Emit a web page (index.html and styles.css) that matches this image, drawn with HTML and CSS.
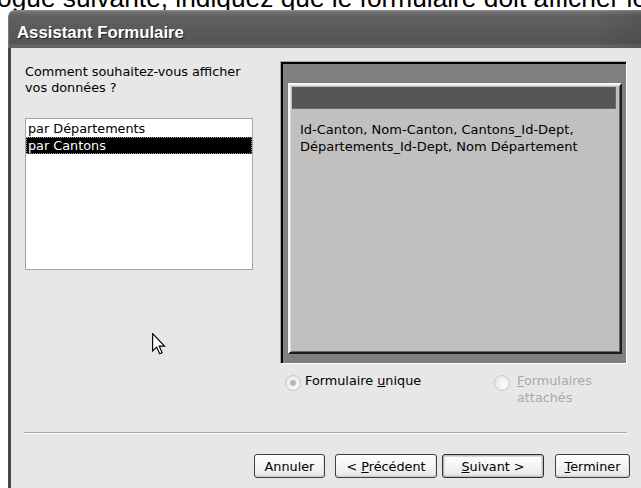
FILE: index.html
```html
<!DOCTYPE html>
<html lang="fr">
<head>
<meta charset="utf-8">
<title>Assistant Formulaire</title>
<link rel="stylesheet" href="styles.css">
</head>
<body>
  <div class="caption-line">ogue suivante, indiquez que le formulaire doit afficher les données</div>

  <div class="window">
    <div class="titlebar"><span class="title">Assistant Formulaire</span></div>

    <div class="client">
      <div class="main">
        <div class="left">
          <p class="prompt">Comment souhaitez-vous afficher<br>vos données ?</p>
          <ul class="listbox">
            <li class="item">par Départements</li>
            <li class="item selected">par Cantons</li>
          </ul>
        </div>

        <div class="right">
          <div class="preview">
            <div class="form-sample">
              <div class="form-head"></div>
              <p class="fields">Id-Canton, Nom-Canton, Cantons_Id-Dept,<br>Départements_Id-Dept, Nom Département</p>
            </div>
          </div>

          <div class="options">
            <label class="option single">
              <span class="radio checked"></span>
              <span class="option-text">Formulaire <u>u</u>nique</span>
            </label>
            <label class="option linked disabled">
              <span class="radio"></span>
              <span class="option-text"><u>F</u>ormulaires<br>attachés</span>
            </label>
          </div>
        </div>
      </div>

      <div class="separator"></div>

      <div class="buttons">
        <button class="btn btn-cancel">Annuler</button>
        <button class="btn btn-back">&lt; <u>P</u>récédent</button>
        <button class="btn btn-next default"><u>S</u>uivant &gt;</button>
        <button class="btn btn-finish"><u>T</u>erminer</button>
      </div>
    </div>
  </div>

  <svg class="cursor" width="14" height="22" viewBox="0 0 12 19" aria-hidden="true">
    <path d="M0.5 0.5 L0.5 15.5 L4 12.2 L6.6 18 L8.7 17.1 L6.2 11.4 L10.8 11.4 Z" fill="#fff" stroke="#000" stroke-width="1" stroke-linejoin="miter"/>
  </svg>
</body>
</html>
```

FILE: styles.css
```css
html, body {
  margin: 0;
  padding: 0;
}

body {
  width: 641px;
  height: 488px;
  overflow: hidden;
  background: #ffffff;
  font-family: "DejaVu Sans", Tahoma, sans-serif;
  font-size: 12.8px;
  color: #000;
}

/* line of document text above the dialog, cut by the top edge */
.caption-line {
  font-family: "Liberation Sans", Arial, sans-serif;
  font-size: 26.3px;
  line-height: 26px;
  white-space: nowrap;
  height: 25px;
  margin: -15px 0 0 -3px;
}

/* dialog window */
.window {
  position: relative;
  z-index: 1;
  margin-left: 8px;
  width: 660px;
  height: 478px;
}

.titlebar {
  box-sizing: border-box;
  height: 38px;
  padding: 13px 0 0 9px;
  border-radius: 7px 7px 0 0;
  background:
    linear-gradient(to right, rgba(0,0,0,0) 0, rgba(0,0,0,0) 590px, rgba(0,0,0,0.12) 640px),
    linear-gradient(to bottom,
      #9a9a9a 0, #7c7c7c 1px, #6c6c6c 3px, #606060 6px,
      #5a5a5a 20px, #555555 32px, #5c5c5c 35px, #6a6a6a 36px, #5e5e5e 38px);
  box-shadow: inset 1px 0 0 #7a7a7a;
}

.title {
  font-family: "Liberation Sans", Arial, sans-serif;
  font-weight: bold;
  font-size: 16.8px;
  line-height: 19px;
  color: #ffffff;
  text-shadow: 1px 1px 0 #222;
  white-space: nowrap;
}

.client {
  box-sizing: border-box;
  height: 440px;
  padding: 13px 0 0 14px;
  background: #e7e7e7;
  border-left: 3px solid #474747;
}

.main {
  display: flex;
  gap: 27px;
}

.left {
  width: 228px;
}

.prompt {
  margin: 3px 0 22px;
  line-height: 16px;
}

.listbox {
  box-sizing: border-box;
  width: 228px;
  height: 152px;
  margin: 0;
  padding: 1px 0 0;
  list-style: none;
  background: #ffffff;
  border: 1px solid #a3a3a3;
}

.item {
  height: 17px;
  line-height: 17px;
  padding-left: 2px;
  white-space: nowrap;
}

.item.selected {
  background: #000;
  color: #fff;
  outline: 1px dotted #9a9a9a;
  outline-offset: -1px;
}

/* preview of the form layout */
.right {
  width: 347px;
}

.preview {
  box-sizing: border-box;
  height: 303px;
  padding: 21px 4px 9px 7px;
  background: #808080;
  border: 1px solid;
  border-color: #a8a8a8 #ffffff #ffffff #a8a8a8;
  box-shadow: inset 2px 2px 0 #000;
}

.form-sample {
  box-sizing: border-box;
  height: 100%;
  padding: 2px 4px 0 2px;
  background: #c0c0c0;
  border: 2px solid;
  border-color: #f6f6f6 #1c1c1c #1c1c1c #f6f6f6;
  box-shadow: inset 1px 1px 0 #dcdcdc, inset -1px -1px 0 #6a6a6a;
}

.form-head {
  height: 22px;
  background: #555555;
  box-shadow: inset -1px -1px 0 #6b6b6b;
}

.fields {
  margin: 12px 0 0 8px;
  font-size: 13px;
  line-height: 17px;
  white-space: nowrap;
}

/* layout choice */
.options {
  display: flex;
  margin-top: 8px;
  padding-left: 5px;
}

.option {
  display: flex;
  align-items: flex-start;
  line-height: 17px;
}

.option.single {
  flex: 0 0 209px;
  gap: 4px;
}

.option.linked {
  gap: 7px;
}

.option.disabled .option-text {
  color: #a9a9a9;
}

.radio {
  box-sizing: border-box;
  flex: 0 0 16px;
  width: 16px;
  height: 16px;
  margin-top: 3px;
  border-radius: 50%;
  border: 1px solid #c9c9c9;
  background: radial-gradient(circle at 60% 60%, #fbfbfb 0, #f0f0f0 45%, #dedede 100%);
  display: flex;
  align-items: center;
  justify-content: center;
}

.radio.checked::after {
  content: "";
  width: 6px;
  height: 6px;
  border-radius: 50%;
  background: #b8b8b8;
}

.separator {
  width: 603px;
  margin: 26px 0 0 -1px;
  border-top: 1px solid #a8a8a8;
  border-bottom: 1px solid #ffffff;
}

/* command buttons */
.buttons {
  display: flex;
  justify-content: flex-end;
  width: 605px;
  margin-top: 20px;
}

.btn {
  box-sizing: border-box;
  height: 24px;
  padding: 0;
  font-family: inherit;
  font-size: 12.8px;
  color: #000;
  border: 1px solid #3e3e3e;
  border-radius: 3px;
  background: linear-gradient(to bottom, #ffffff 0, #f6f6f6 40%, #ececec 85%, #d6d6d6 100%);
  box-shadow: inset 0 -1px 0 #cfcfcf, inset -1px 0 0 #e0e0e0;
  white-space: nowrap;
}

.btn-cancel { width: 71px; }
.btn-back { width: 102px; margin-left: 10px; }
.btn-next { width: 102px; margin-left: 5px; }
.btn-finish { width: 75px; margin-left: 11px; }

.btn.default {
  border-color: #2e2e2e;
  box-shadow: inset 0 0 0 1px #bdbdbd, inset 0 0 0 2px #dadada;
}

/* mouse pointer resting over the dialog */
.cursor {
  position: absolute;
  left: 152px;
  top: 333px;
  z-index: 5;
}
```
